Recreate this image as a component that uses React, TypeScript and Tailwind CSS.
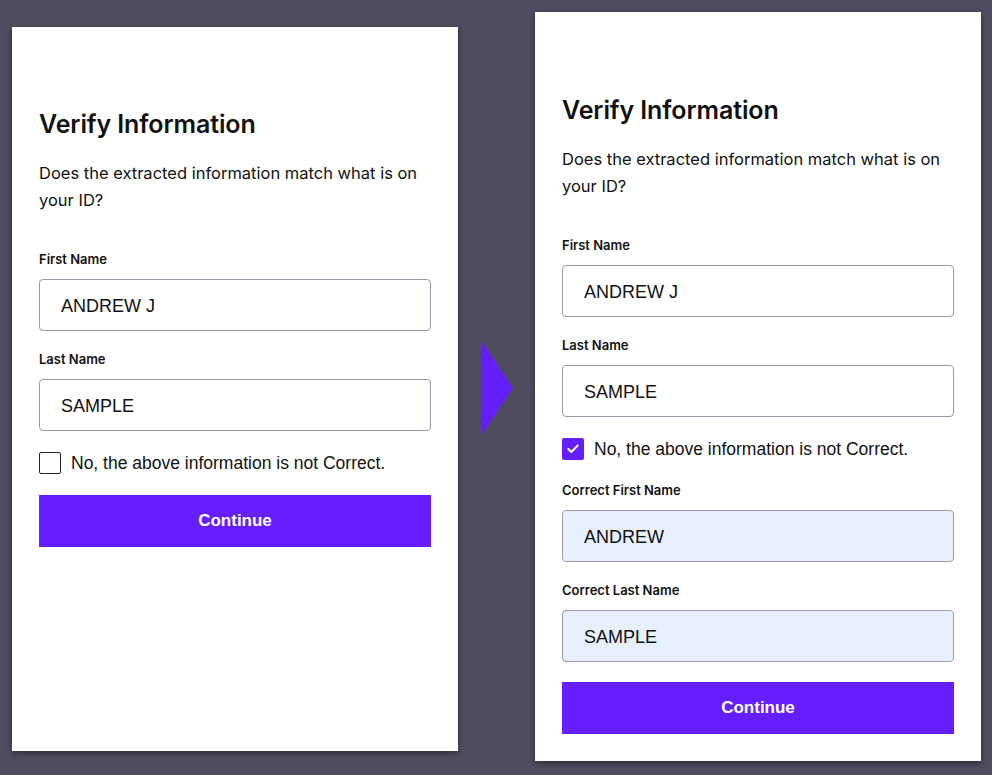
import React from "react";
import { Check } from "lucide-react";

const sans = { fontFamily: "Inter, 'Noto Sans', sans-serif" };
const arial = { fontFamily: "'Liberation Sans', Arial, sans-serif" };

function Field({
  label,
  value,
  filled = false,
  first = false,
}: {
  label: string;
  value: string;
  filled?: boolean;
  first?: boolean;
}) {
  return (
    <div className={first ? "mt-[36px]" : "mt-[19px]"}>
      <div className="text-[13px] leading-[18px] font-semibold text-[#111]" style={sans}>
        {label}
      </div>
      <div
        className={`mt-[11px] h-[52px] rounded-[4px] border border-[#9a99a8] flex items-center px-[21px] pt-[2px] text-[18px] text-[#111] ${
          filled ? "bg-[#e8f0fe]" : "bg-white"
        }`}
        style={arial}
      >
        {value}
      </div>
    </div>
  );
}

function CheckRow({ checked }: { checked: boolean }) {
  return (
    <div className="mt-[21px] flex items-center gap-[10px] h-[22px]">
      {checked ? (
        <div className="w-[22px] h-[22px] rounded-[2px] bg-[#651fff] flex items-center justify-center">
          <Check className="w-[14px] h-[14px] text-white" strokeWidth={3.5} />
        </div>
      ) : (
        <div className="w-[22px] h-[22px] rounded-[2px] border-[1.5px] border-[#222] bg-white" />
      )}
      <span className="text-[17.5px] text-[#111]" style={arial}>
        No, the above information is not Correct.
      </span>
    </div>
  );
}

function Continue({ mt }: { mt: string }) {
  return (
    <button
      className={`${mt} h-[52px] w-full bg-[#651fff] text-white text-[17px] font-bold`}
      style={arial}
    >
      Continue
    </button>
  );
}

function Header() {
  return (
    <>
      <h1 className="text-[25px] leading-8 font-semibold text-[#111] tracking-[-0.1px]" style={sans}>
        Verify Information
      </h1>
      <p className="mt-[20px] text-[16.5px] leading-[27px] text-[#111]" style={sans}>
        Does the extracted information match what is on your ID?
      </p>
    </>
  );
}

export default function App() {
  return (
    <div className="w-full h-[775px] bg-[#4f4d5e] flex items-start pl-3 overflow-hidden">
      {/* before */}
      <div className="shrink-0 mt-[27px] w-[446px] h-[724px] bg-white shadow-[0_2px_6px_rgba(0,0,0,0.45)] px-[27px] pt-[81px] flex flex-col">
        <Header />
        <Field label="First Name" value="ANDREW J" first />
        <Field label="Last Name" value="SAMPLE" />
        <CheckRow checked={false} />
        <Continue mt="mt-[21px]" />
      </div>

      {/* arrow */}
      <div className="shrink-0 w-[77px] h-[775px] flex items-center justify-center">
        <svg width="32" height="96" viewBox="0 0 32 96" className="mt-[1px]">
          <polygon points="0,0 32,48 0,96" fill="#651fff" />
        </svg>
      </div>

      {/* after */}
      <div className="shrink-0 mt-[12px] w-[446px] h-[749px] bg-white shadow-[0_2px_6px_rgba(0,0,0,0.45)] px-[27px] pt-[82px] flex flex-col">
        <Header />
        <Field label="First Name" value="ANDREW J" first />
        <Field label="Last Name" value="SAMPLE" />
        <CheckRow checked />
        <div className="mt-[2px]">
          <Field label="Correct First Name" value="ANDREW" filled />
        </div>
        <Field label="Correct Last Name" value="SAMPLE" filled />
        <Continue mt="mt-[20px]" />
      </div>
    </div>
  );
}
